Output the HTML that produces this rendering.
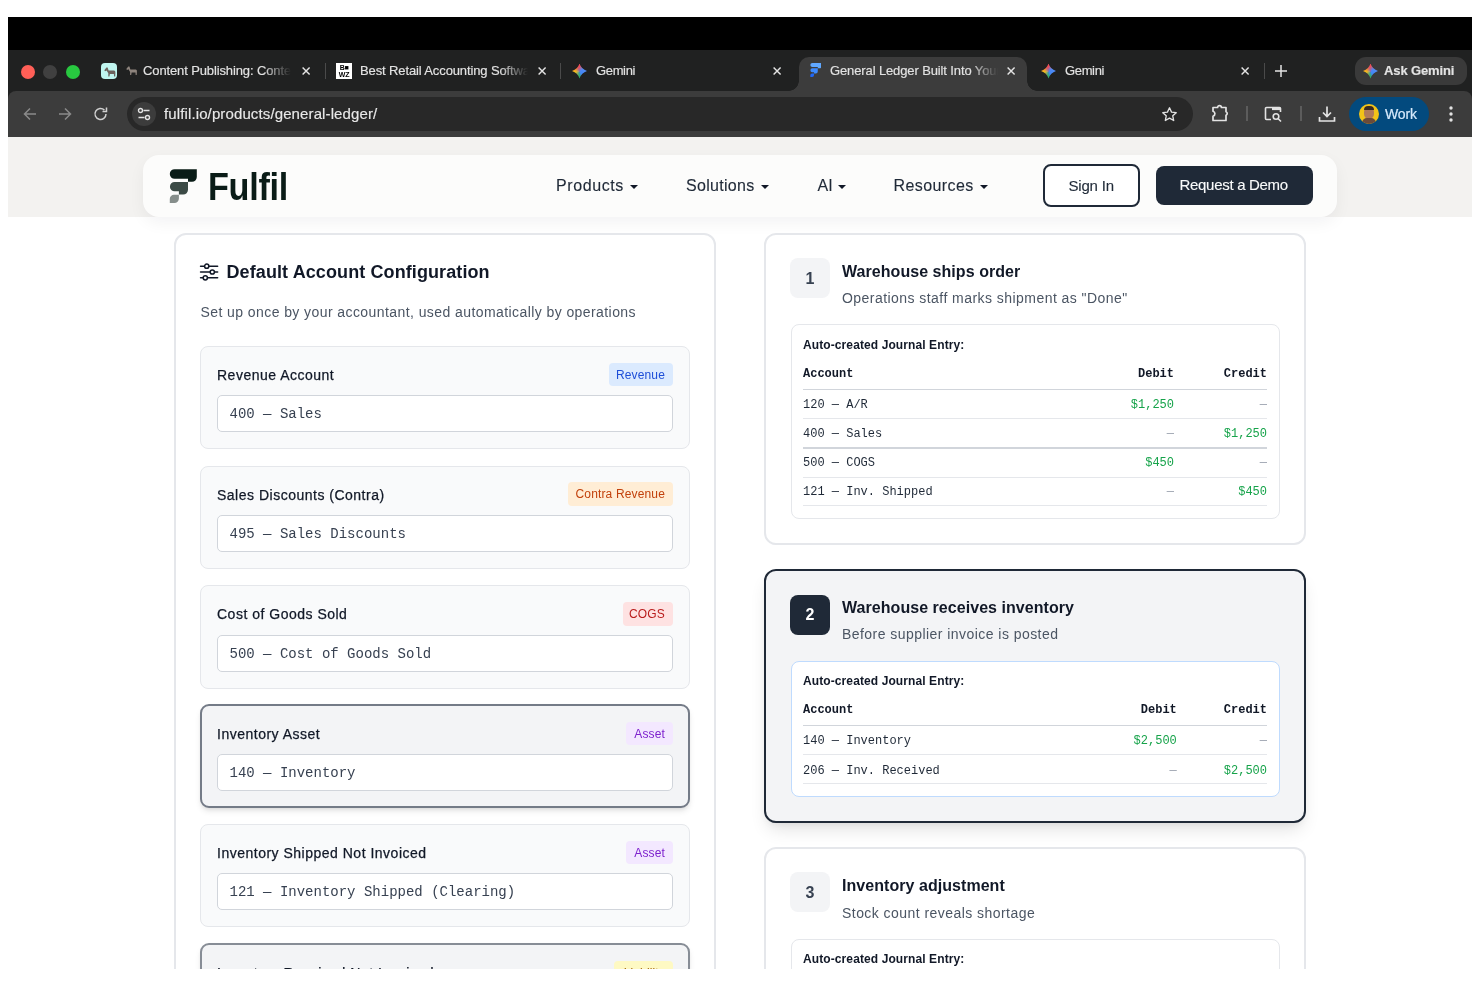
<!DOCTYPE html>
<html><head><meta charset="utf-8">
<style>
*{box-sizing:border-box;margin:0;padding:0}
html,body{width:1480px;height:987px;overflow:hidden;background:#fff;font-family:"Liberation Sans",sans-serif}
.a{position:absolute}
#chrome{will-change:transform;position:absolute;left:0;top:0;width:1480px;height:987px;clip-path:inset(17px 8px 850px 8px)}
#page{will-change:transform;position:absolute;left:0;top:0;width:1480px;height:987px;clip-path:inset(137px 8px 18px 8px);background:#fff}
.tt{position:absolute;color:#e3e3e3;font-size:13px;white-space:nowrap;line-height:16px;letter-spacing:-.12px;-webkit-text-stroke:.15px currentColor}
.nav{position:absolute;font-size:16px;color:#1f2937;line-height:20px;white-space:nowrap;-webkit-text-stroke:.12px currentColor}
.car{position:absolute;width:0;height:0;border-left:4px solid transparent;border-right:4px solid transparent;border-top:4px solid #111827}
</style></head><body>
<div id="chrome">
  <div class="a" style="left:8px;top:17px;width:1464px;height:33px;background:#000"></div>
  <div class="a" style="left:8px;top:50px;width:1464px;height:87px;background:#202121"></div>
  <!-- traffic lights -->
  <div class="a" style="left:20.5px;top:64.5px;width:14px;height:14px;border-radius:50%;background:#ff5f57"></div>
  <div class="a" style="left:43px;top:64.5px;width:14px;height:14px;border-radius:50%;background:#404040"></div>
  <div class="a" style="left:66px;top:64.5px;width:14px;height:14px;border-radius:50%;background:#28c840"></div>
  <!-- tab1 -->
  <div class="a" style="left:101px;top:63px;width:16px;height:16px;border-radius:4px;background:#bff5ef"></div>
  <svg class="a" style="left:104px;top:67px" width="11.5" height="9.6" viewBox="0 0 11.5 9.6"><path d="M0.3 3.2L2.4 0.4L3.6 0.6L4.6 3.6L10.2 3.6Q11.6 3.9 11.4 5.8L11.2 9.6L10.1 9.6L9.9 6.9L5.9 6.9L5.4 9.6L4.3 9.6L4.3 6.2L2.6 3.4L1.1 4.3Z" fill="#6d625d"/></svg>
  <svg class="a" style="left:125.5px;top:66.3px" width="11" height="9.2" viewBox="0 0 11.5 9.6"><path d="M0.3 3.2L2.4 0.4L3.6 0.6L4.6 3.6L10.2 3.6Q11.6 3.9 11.4 5.8L11.2 9.6L10.1 9.6L9.9 6.9L5.9 6.9L5.4 9.6L4.3 9.6L4.3 6.2L2.6 3.4L1.1 4.3Z" fill="#8e847d"/></svg>
  <div class="tt" style="left:143px;top:63px;width:150px;overflow:hidden;-webkit-mask-image:linear-gradient(90deg,#000 120px,transparent 148px)">Content Publishing: Content</div>
  <svg class="a" style="left:301px;top:66px" width="10" height="10" viewBox="0 0 10 10"><path d="M1.6 1.6L8.6 8.6M8.6 1.6L1.6 8.6" stroke="#e3e3e3" stroke-width="1.45"/></svg>
  <div class="a" style="left:325px;top:63px;width:1px;height:16px;background:#4a4a4a"></div>
  <!-- tab2 -->
  <div class="a" style="left:336px;top:63px;width:16px;height:16px;background:#fff"></div>
  <div class="a" style="left:337px;top:64px;width:14px;height:14px;font-size:7px;line-height:7px;font-weight:bold;color:#000;text-align:center;letter-spacing:-.3px">B&#9632;<br>WZ</div>
  <div class="tt" style="left:360px;top:63px;width:170px;overflow:hidden;-webkit-mask-image:linear-gradient(90deg,#000 140px,transparent 168px)">Best Retail Accounting Software</div>
  <svg class="a" style="left:537px;top:66px" width="10" height="10" viewBox="0 0 10 10"><path d="M1.6 1.6L8.6 8.6M8.6 1.6L1.6 8.6" stroke="#e3e3e3" stroke-width="1.45"/></svg>
  <div class="a" style="left:560px;top:63px;width:1px;height:16px;background:#4a4a4a"></div>
  <!-- tab3 -->
  <div class="a" style="left:572.0px;top:63.5px;width:15px;height:15px;clip-path:path('M7.5 15A11.5 11.5 0 0 0 0 7.5A11.5 11.5 0 0 0 7.5 0A11.5 11.5 0 0 0 15 7.5A11.5 11.5 0 0 0 7.5 15Z');background:radial-gradient(circle at 60% 50%,rgba(66,133,244,.85) 0,rgba(66,133,244,.0) 45%),conic-gradient(from 0deg,#ef4d57 0deg,#5b8ef5 60deg,#3f86f4 140deg,#2fae58 185deg,#f7bd1a 265deg,#ef4d57 345deg)"></div>
  <div class="tt" style="left:596px;top:63px;letter-spacing:-.35px">Gemini</div>
  <svg class="a" style="left:772px;top:66px" width="10" height="10" viewBox="0 0 10 10"><path d="M1.6 1.6L8.6 8.6M8.6 1.6L1.6 8.6" stroke="#e3e3e3" stroke-width="1.45"/></svg>
  <!-- active tab -->
  <div class="a" style="left:799px;top:57px;width:228px;height:40px;background:#3c3c3c;border-radius:10px 10px 0 0"></div>
  <div class="a" style="left:789px;top:81px;width:10px;height:10px;background:radial-gradient(circle at 0 0,transparent 9.5px,#3c3c3c 10px)"></div>
  <div class="a" style="left:1027px;top:81px;width:10px;height:10px;background:radial-gradient(circle at 100% 0,transparent 9.5px,#3c3c3c 10px)"></div>
  <svg class="a" style="left:809.5px;top:63px" width="11.9" height="14.4" viewBox="0 0 29 35"><path d="M5.6 0.2H27.8V8A4.8 4.8 0 0 1 23 12.8H19V9.8H5.6A4.8 4.8 0 0 1 5.6 0.2Z" fill="#60a8ff"/><path d="M5.6 13H19V20.8A4.8 4.8 0 0 1 14.2 25.6H9.9V22.3H5.6A4.65 4.65 0 0 1 5.6 13Z" fill="#3d8bff"/><path d="M5 25.8H9.9V29.5A4.5 4.5 0 0 1 5.4 34H0.8V30A4.2 4.2 0 0 1 5 25.8Z" fill="#2168f7"/></svg>
  <div class="tt" style="left:830px;top:63px;width:170px;overflow:hidden;-webkit-mask-image:linear-gradient(90deg,#000 140px,transparent 168px)">General Ledger Built Into Your</div>
  <svg class="a" style="left:1006px;top:66px" width="10" height="10" viewBox="0 0 10 10"><path d="M1.6 1.6L8.6 8.6M8.6 1.6L1.6 8.6" stroke="#e3e3e3" stroke-width="1.45"/></svg>
  <!-- tab5 -->
  <div class="a" style="left:1041.0px;top:63.5px;width:15px;height:15px;clip-path:path('M7.5 15A11.5 11.5 0 0 0 0 7.5A11.5 11.5 0 0 0 7.5 0A11.5 11.5 0 0 0 15 7.5A11.5 11.5 0 0 0 7.5 15Z');background:radial-gradient(circle at 60% 50%,rgba(66,133,244,.85) 0,rgba(66,133,244,.0) 45%),conic-gradient(from 0deg,#ef4d57 0deg,#5b8ef5 60deg,#3f86f4 140deg,#2fae58 185deg,#f7bd1a 265deg,#ef4d57 345deg)"></div>
  <div class="tt" style="left:1065px;top:63px;letter-spacing:-.35px">Gemini</div>
  <svg class="a" style="left:1240px;top:66px" width="10" height="10" viewBox="0 0 10 10"><path d="M1.6 1.6L8.6 8.6M8.6 1.6L1.6 8.6" stroke="#e3e3e3" stroke-width="1.45"/></svg>
  <div class="a" style="left:1264px;top:63px;width:1px;height:16px;background:#4a4a4a"></div>
  <svg class="a" style="left:1275px;top:65px" width="12" height="12" viewBox="0 0 12 12"><path d="M6 0V12M0 6H12" stroke="#e3e3e3" stroke-width="1.5"/></svg>
  <div class="a" style="left:1355px;top:57px;width:112px;height:28px;border-radius:11px;background:#3a3a3a"></div>
  <div class="a" style="left:1363.0px;top:63.5px;width:15px;height:15px;clip-path:path('M7.5 15A11.5 11.5 0 0 0 0 7.5A11.5 11.5 0 0 0 7.5 0A11.5 11.5 0 0 0 15 7.5A11.5 11.5 0 0 0 7.5 15Z');background:radial-gradient(circle at 60% 50%,rgba(66,133,244,.85) 0,rgba(66,133,244,.0) 45%),conic-gradient(from 0deg,#ef4d57 0deg,#5b8ef5 60deg,#3f86f4 140deg,#2fae58 185deg,#f7bd1a 265deg,#ef4d57 345deg)"></div>
  <div class="tt" style="left:1384px;top:63px;font-weight:bold;font-size:13px">Ask Gemini</div>
  <!-- toolbar -->
  <div class="a" style="left:8px;top:91px;width:1464px;height:46.5px;background:#3c3c3c;border-radius:8px 8px 0 0"></div>
  <svg class="a" style="left:22px;top:106px" width="16" height="16" viewBox="0 0 16 16"><path d="M14 8H2.5M8 2.5L2.5 8L8 13.5" stroke="#8a8a8a" stroke-width="1.5" fill="none"/></svg>
  <svg class="a" style="left:57px;top:106px" width="16" height="16" viewBox="0 0 16 16"><path d="M2 8H13.5M8 2.5L13.5 8L8 13.5" stroke="#8a8a8a" stroke-width="1.5" fill="none"/></svg>
  <svg class="a" style="left:93px;top:106px" width="16" height="16" viewBox="0 0 16 16"><path d="M13 8A5.5 5.5 0 1 1 11.4 4.1" stroke="#d0d0d0" stroke-width="1.5" fill="none"/><path d="M13.5 1.5V5.5H9.5" stroke="#d0d0d0" stroke-width="1.5" fill="none"/></svg>
  <div class="a" style="left:127px;top:97px;width:1066px;height:34px;border-radius:17px;background:#282828"></div>
  <div class="a" style="left:132px;top:102px;width:24px;height:24px;border-radius:50%;background:#3c3c3c"></div>
  <svg class="a" style="left:137px;top:107.3px" width="14" height="14" viewBox="0 0 14 14"><circle cx="3.5" cy="3.5" r="2" stroke="#e3e3e3" stroke-width="1.4" fill="none"/><path d="M6.5 3.5H12.5M1.5 10.5H7.5" stroke="#e3e3e3" stroke-width="1.4"/><circle cx="10.5" cy="10.5" r="2" stroke="#e3e3e3" stroke-width="1.4" fill="none"/></svg>
  <div class="tt" style="left:164px;top:105px;font-size:15px;line-height:18px;letter-spacing:.12px;color:#e8e8e8">fulfil.io/products/general-ledger/</div>
  <svg class="a" style="left:1161px;top:106px" width="17" height="17" viewBox="0 0 24 24"><path d="M12 2.5L14.9 8.6L21.5 9.4L16.6 13.9L17.9 20.5L12 17.2L6.1 20.5L7.4 13.9L2.5 9.4L9.1 8.6Z" stroke="#e3e3e3" stroke-width="1.9" fill="none" stroke-linejoin="round"/></svg>
  <svg class="a" style="left:1210px;top:103px" width="20" height="20" viewBox="0 0 20 20"><path d="M3 4.5H7.6A1.9 1.9 0 0 1 11.4 4.5H16V8.8A1.8 1.8 0 0 1 16 12.2V17.5H3V13.2Q5 12.5 4.9 10.5Q4.8 9 3 8.3Z" stroke="#e3e3e3" stroke-width="1.7" fill="none" stroke-linejoin="round"/></svg>
  <div class="a" style="left:1245.5px;top:106.3px;width:2px;height:15.2px;background:#5c5c5c"></div>
  <svg class="a" style="left:1264px;top:105px" width="19" height="18" viewBox="0 0 19 18"><path d="M7 14.5H2.5A1 1 0 0 1 1.5 13.5V3.5A1 1 0 0 1 2.5 2.5H15.5A1 1 0 0 1 16.5 3.5V7" stroke="#e3e3e3" stroke-width="1.6" fill="none"/><rect x="8" y="2.5" width="8.5" height="2.6" fill="#e3e3e3"/><circle cx="12" cy="11.5" r="2.8" stroke="#e3e3e3" stroke-width="1.6" fill="none"/><path d="M14 13.5L17 16.5" stroke="#e3e3e3" stroke-width="1.6"/></svg>
  <div class="a" style="left:1299.5px;top:106.3px;width:2px;height:15.2px;background:#5c5c5c"></div>
  <svg class="a" style="left:1318px;top:105px" width="18" height="18" viewBox="0 0 18 18"><path d="M9 1.5V11.5M5 7.5L9 11.5L13 7.5M1.5 12V16H16.5V12" stroke="#e3e3e3" stroke-width="1.7" fill="none"/></svg>
  <div class="a" style="left:1349px;top:97px;width:80px;height:34px;border-radius:17px;background:#034a7e"></div>
  <div class="a" style="left:1358.5px;top:104px;width:20px;height:20px;border-radius:50%;background:#f2c318;overflow:hidden"><div class="a" style="left:5px;top:3px;width:10px;height:12px;border-radius:5px;background:#b07a5a"></div><div class="a" style="left:3px;top:14px;width:14px;height:8px;border-radius:5px 5px 0 0;background:#6b4a3a"></div><div class="a" style="left:5px;top:2px;width:10px;height:4px;border-radius:4px 4px 0 0;background:#3a2a20"></div></div>
  <div class="tt" style="left:1385px;top:105px;font-size:14px;line-height:18px;color:#d6eafc;-webkit-text-stroke:.2px #d6eafc">Work</div>
  <svg class="a" style="left:1447px;top:104px" width="8" height="20" viewBox="0 0 8 20"><circle cx="4" cy="4" r="1.7" fill="#e3e3e3"/><circle cx="4" cy="10" r="1.7" fill="#e3e3e3"/><circle cx="4" cy="16" r="1.7" fill="#e3e3e3"/></svg>
</div>
<div id="page">
  <div class="a" style="left:8px;top:137px;width:1464px;height:80px;background:#f3f2f0"></div>
  <div class="a" style="left:143px;top:155px;width:1194px;height:62px;background:#fcfcfb;border-radius:16px;box-shadow:0 6px 16px rgba(17,24,39,.05)"></div>
  <!-- logo -->
  <svg class="a" style="left:169px;top:169px" width="29" height="35" viewBox="0 0 29 35"><path d="M5.6 0.2H27.8V8A4.8 4.8 0 0 1 23 12.8H19V9.8H5.6A4.8 4.8 0 0 1 5.6 0.2Z" fill="#0a1c17"/><path d="M5.6 13H19V20.8A4.8 4.8 0 0 1 14.2 25.6H9.9V22.3H5.6A4.65 4.65 0 0 1 5.6 13Z" fill="#3b4a45"/><path d="M5 25.8H9.9V29.5A4.5 4.5 0 0 1 5.4 34H0.8V30A4.2 4.2 0 0 1 5 25.8Z" fill="#868e8b"/></svg>
  <div class="a" style="left:208px;top:164.5px;font-size:38px;line-height:44px;font-weight:bold;color:#0a1c17;transform:scaleX(.9);transform-origin:0 0;letter-spacing:-.3px">Fulfil</div>
  <!-- nav -->
  <div class="nav" style="left:556px;top:176px;letter-spacing:.6px">Products</div><div class="car" style="left:630px;top:185px"></div>
  <div class="nav" style="left:686px;top:176px;letter-spacing:.3px">Solutions</div><div class="car" style="left:761px;top:185px"></div>
  <div class="nav" style="left:817.5px;top:176px">AI</div><div class="car" style="left:838px;top:185px"></div>
  <div class="nav" style="left:893.5px;top:176px;letter-spacing:.4px">Resources</div><div class="car" style="left:979.5px;top:185px"></div>
  <div class="a" style="left:1043px;top:164px;width:97px;height:43px;border:2px solid #1f2937;border-radius:8px;background:#fff"></div>
  <div class="nav" style="left:1068.5px;top:175.5px;font-size:15px;color:#1f2937;letter-spacing:-.2px">Sign In</div>
  <div class="a" style="left:1156px;top:166px;width:157px;height:39px;border-radius:8px;background:#1f2937"></div>
  <div class="nav" style="left:1179.5px;top:175px;font-size:15px;color:#f9fafb;letter-spacing:-.3px">Request a Demo</div>
<div class="a" style="left:174px;top:233px;width:542.00px;height:867.00px;border:2px solid #e5e7eb;border-radius:12px;background:#fff"></div>
<svg class="a" style="left:198px;top:262px" width="22" height="20" viewBox="0 0 22 20"><path d="M2.6 4.2H19.6M2.6 10H19.6M2.6 15.8H19.6" stroke="#111827" stroke-width="1.6" stroke-linecap="round"/><circle cx="8.7" cy="4.2" r="2.1" fill="#fff" stroke="#111827" stroke-width="1.5"/><circle cx="14.3" cy="10" r="2.1" fill="#fff" stroke="#111827" stroke-width="1.5"/><circle cx="7.3" cy="15.8" r="2.1" fill="#fff" stroke="#111827" stroke-width="1.5"/></svg>
<div style="position:absolute;top:263.46px;font-family:'Liberation Sans',sans-serif;font-size:18px;line-height:18px;color:#111827;white-space:nowrap;font-weight:bold;letter-spacing:0.1px;left:226.50px;">Default Account Configuration</div>
<div style="position:absolute;top:305.15px;font-family:'Liberation Sans',sans-serif;font-size:14px;line-height:14px;color:#4b5563;white-space:nowrap;letter-spacing:0.42px;left:200.50px;">Set up once by your accountant, used automatically by operations</div>
<div class="a" style="left:200px;top:345.9px;width:490.00px;height:103.40px;border:1px solid #e5e7eb;border-radius:8px;background:#f9fafb"></div>
<div style="position:absolute;top:367.95px;font-family:'Liberation Sans',sans-serif;font-size:14px;line-height:14px;color:#111827;white-space:nowrap;letter-spacing:0.5px;left:217.00px;-webkit-text-stroke:.25px #111827;">Revenue Account</div>
<div class="a" style="left:608.5px;top:362.59999999999997px;width:64.50px;height:23.60px;background:#dbeafe;border-radius:4px"></div>
<div style="position:absolute;top:368.74px;font-family:'Liberation Sans',sans-serif;font-size:12px;line-height:12px;color:#1d4ed8;white-space:nowrap;letter-spacing:0.15px;right:815.00px;text-align:right;">Revenue</div>
<div class="a" style="left:217px;top:395.09999999999997px;width:456.00px;height:37.20px;border:1px solid #d1d5db;border-radius:5px;background:#fff"></div>
<div style="position:absolute;top:407.17px;font-family:'Liberation Mono',monospace;font-size:14px;line-height:14px;color:#374151;white-space:nowrap;left:229.50px;">400 — Sales</div>
<div class="a" style="left:200px;top:465.6px;width:490.00px;height:103.40px;border:1px solid #e5e7eb;border-radius:8px;background:#f9fafb"></div>
<div style="position:absolute;top:487.65px;font-family:'Liberation Sans',sans-serif;font-size:14px;line-height:14px;color:#111827;white-space:nowrap;letter-spacing:0.5px;left:217.00px;-webkit-text-stroke:.25px #111827;">Sales Discounts (Contra)</div>
<div class="a" style="left:567.5px;top:482.3px;width:105.50px;height:23.60px;background:#ffedd5;border-radius:4px"></div>
<div style="position:absolute;top:488.44px;font-family:'Liberation Sans',sans-serif;font-size:12px;line-height:12px;color:#c2410c;white-space:nowrap;letter-spacing:0.15px;right:815.00px;text-align:right;">Contra Revenue</div>
<div class="a" style="left:217px;top:514.8000000000001px;width:456.00px;height:37.20px;border:1px solid #d1d5db;border-radius:5px;background:#fff"></div>
<div style="position:absolute;top:526.87px;font-family:'Liberation Mono',monospace;font-size:14px;line-height:14px;color:#374151;white-space:nowrap;left:229.50px;">495 — Sales Discounts</div>
<div class="a" style="left:200px;top:585.4px;width:490.00px;height:103.40px;border:1px solid #e5e7eb;border-radius:8px;background:#f9fafb"></div>
<div style="position:absolute;top:607.45px;font-family:'Liberation Sans',sans-serif;font-size:14px;line-height:14px;color:#111827;white-space:nowrap;letter-spacing:0.5px;left:217.00px;-webkit-text-stroke:.25px #111827;">Cost of Goods Sold</div>
<div class="a" style="left:623.4px;top:602.1px;width:49.60px;height:23.60px;background:#fee2e2;border-radius:4px"></div>
<div style="position:absolute;top:608.24px;font-family:'Liberation Sans',sans-serif;font-size:12px;line-height:12px;color:#b91c1c;white-space:nowrap;letter-spacing:0.15px;right:815.00px;text-align:right;">COGS</div>
<div class="a" style="left:217px;top:634.6px;width:456.00px;height:37.20px;border:1px solid #d1d5db;border-radius:5px;background:#fff"></div>
<div style="position:absolute;top:646.67px;font-family:'Liberation Mono',monospace;font-size:14px;line-height:14px;color:#374151;white-space:nowrap;left:229.50px;">500 — Cost of Goods Sold</div>
<div class="a" style="left:199.6px;top:704.1999999999999px;width:490.70px;height:104.20px;border:2px solid #747b87;border-radius:9px;background:#f3f4f6;box-shadow:0 4px 6px -1px rgba(0,0,0,.1),0 2px 4px -2px rgba(0,0,0,.1)"></div>
<div style="position:absolute;top:726.85px;font-family:'Liberation Sans',sans-serif;font-size:14px;line-height:14px;color:#111827;white-space:nowrap;letter-spacing:0.5px;left:217.00px;-webkit-text-stroke:.25px #111827;">Inventory Asset</div>
<div class="a" style="left:626px;top:721.5px;width:47.00px;height:23.60px;background:#f3e8ff;border-radius:4px"></div>
<div style="position:absolute;top:727.64px;font-family:'Liberation Sans',sans-serif;font-size:12px;line-height:12px;color:#7e22ce;white-space:nowrap;letter-spacing:0.15px;right:815.00px;text-align:right;">Asset</div>
<div class="a" style="left:217px;top:754.0px;width:456.00px;height:37.20px;border:1px solid #d1d5db;border-radius:5px;background:#fff"></div>
<div style="position:absolute;top:766.07px;font-family:'Liberation Mono',monospace;font-size:14px;line-height:14px;color:#374151;white-space:nowrap;left:229.50px;">140 — Inventory</div>
<div class="a" style="left:200px;top:824.1px;width:490.00px;height:103.40px;border:1px solid #e5e7eb;border-radius:8px;background:#f9fafb"></div>
<div style="position:absolute;top:846.15px;font-family:'Liberation Sans',sans-serif;font-size:14px;line-height:14px;color:#111827;white-space:nowrap;letter-spacing:0.5px;left:217.00px;-webkit-text-stroke:.25px #111827;">Inventory Shipped Not Invoiced</div>
<div class="a" style="left:626px;top:840.8000000000001px;width:47.00px;height:23.60px;background:#f3e8ff;border-radius:4px"></div>
<div style="position:absolute;top:846.94px;font-family:'Liberation Sans',sans-serif;font-size:12px;line-height:12px;color:#7e22ce;white-space:nowrap;letter-spacing:0.15px;right:815.00px;text-align:right;">Asset</div>
<div class="a" style="left:217px;top:873.3000000000001px;width:456.00px;height:37.20px;border:1px solid #d1d5db;border-radius:5px;background:#fff"></div>
<div style="position:absolute;top:885.37px;font-family:'Liberation Mono',monospace;font-size:14px;line-height:14px;color:#374151;white-space:nowrap;left:229.50px;">121 — Inventory Shipped (Clearing)</div>
<div class="a" style="left:199.6px;top:943.1999999999999px;width:490.70px;height:104.20px;border:2px solid #878d96;border-radius:9px;background:#f3f4f6;box-shadow:0 4px 6px -1px rgba(0,0,0,.1),0 2px 4px -2px rgba(0,0,0,.1)"></div>
<div style="position:absolute;top:965.85px;font-family:'Liberation Sans',sans-serif;font-size:14px;line-height:14px;color:#111827;white-space:nowrap;letter-spacing:0.5px;left:217.00px;-webkit-text-stroke:.25px #111827;">Inventory Received Not Invoiced</div>
<div class="a" style="left:614.2px;top:960.5px;width:58.80px;height:23.60px;background:#fef9c3;border-radius:4px"></div>
<div style="position:absolute;top:966.64px;font-family:'Liberation Sans',sans-serif;font-size:12px;line-height:12px;color:#a16207;white-space:nowrap;letter-spacing:0.15px;right:815.00px;text-align:right;">Liability</div>
<div class="a" style="left:217px;top:993.0px;width:456.00px;height:37.20px;border:1px solid #d1d5db;border-radius:5px;background:#fff"></div>
<div style="position:absolute;top:1005.07px;font-family:'Liberation Mono',monospace;font-size:14px;line-height:14px;color:#374151;white-space:nowrap;left:229.50px;">206 — Inventory Received (Clearing)</div>
<div class="a" style="left:764px;top:233px;width:542.00px;height:312.00px;border:2px solid #e5e7eb;border-radius:12px;background:#fff"></div>
<div class="a" style="left:790px;top:258px;width:40.00px;height:40.00px;background:#f3f4f6;border-radius:8px"></div>
<div style="position:absolute;top:270.66px;font-family:'Liberation Sans',sans-serif;font-size:16px;line-height:16px;color:#374151;white-space:nowrap;font-weight:bold;left:810.00px;width:0;text-align:center;display:flex;justify-content:center;">1</div>
<div style="position:absolute;top:264.06px;font-family:'Liberation Sans',sans-serif;font-size:16px;line-height:16px;color:#111827;white-space:nowrap;font-weight:bold;letter-spacing:0.05px;left:842.00px;">Warehouse ships order</div>
<div style="position:absolute;top:291.25px;font-family:'Liberation Sans',sans-serif;font-size:14px;line-height:14px;color:#4b5563;white-space:nowrap;letter-spacing:0.45px;left:842.00px;">Operations staff marks shipment as "Done"</div>
<div class="a" style="left:790.5px;top:324.3px;width:489.50px;height:194.70px;border:1px solid #e5e7eb;border-radius:8px;background:#fff"></div>
<div style="position:absolute;top:338.84px;font-family:'Liberation Sans',sans-serif;font-size:12px;line-height:12px;color:#111827;white-space:nowrap;font-weight:bold;letter-spacing:0.1px;left:803.00px;">Auto-created Journal Entry:</div>
<div style="position:absolute;top:367.91px;font-family:'Liberation Mono',monospace;font-size:12px;line-height:12px;color:#111827;white-space:nowrap;font-weight:bold;left:803.00px;">Account</div>
<div style="position:absolute;top:367.91px;font-family:'Liberation Mono',monospace;font-size:12px;line-height:12px;color:#111827;white-space:nowrap;font-weight:bold;right:306.00px;text-align:right;">Debit</div>
<div style="position:absolute;top:367.91px;font-family:'Liberation Mono',monospace;font-size:12px;line-height:12px;color:#111827;white-space:nowrap;font-weight:bold;right:213.00px;text-align:right;">Credit</div>
<div class="a" style="left:803px;top:389.0px;width:464.00px;height:1.00px;background:#d1d5db"></div>
<div style="position:absolute;top:398.81px;font-family:'Liberation Mono',monospace;font-size:12px;line-height:12px;color:#1f2937;white-space:nowrap;left:803.00px;">120 — A/R</div>
<div style="position:absolute;top:398.81px;font-family:'Liberation Mono',monospace;font-size:12px;line-height:12px;color:#16a34a;white-space:nowrap;right:306.00px;text-align:right;">$1,250</div>
<div style="position:absolute;top:398.81px;font-family:'Liberation Mono',monospace;font-size:12px;line-height:12px;color:#9ca3af;white-space:nowrap;right:213.00px;text-align:right;">—</div>
<div class="a" style="left:803px;top:418.1px;width:464.00px;height:1.00px;background:#e5e7eb"></div>
<div style="position:absolute;top:427.71px;font-family:'Liberation Mono',monospace;font-size:12px;line-height:12px;color:#1f2937;white-space:nowrap;left:803.00px;">400 — Sales</div>
<div style="position:absolute;top:427.71px;font-family:'Liberation Mono',monospace;font-size:12px;line-height:12px;color:#9ca3af;white-space:nowrap;right:306.00px;text-align:right;">—</div>
<div style="position:absolute;top:427.71px;font-family:'Liberation Mono',monospace;font-size:12px;line-height:12px;color:#16a34a;white-space:nowrap;right:213.00px;text-align:right;">$1,250</div>
<div class="a" style="left:803px;top:446.5px;width:464.00px;height:2.00px;background:#d1d5db"></div>
<div style="position:absolute;top:457.01px;font-family:'Liberation Mono',monospace;font-size:12px;line-height:12px;color:#1f2937;white-space:nowrap;left:803.00px;">500 — COGS</div>
<div style="position:absolute;top:457.01px;font-family:'Liberation Mono',monospace;font-size:12px;line-height:12px;color:#16a34a;white-space:nowrap;right:306.00px;text-align:right;">$450</div>
<div style="position:absolute;top:457.01px;font-family:'Liberation Mono',monospace;font-size:12px;line-height:12px;color:#9ca3af;white-space:nowrap;right:213.00px;text-align:right;">—</div>
<div class="a" style="left:803px;top:476.7px;width:464.00px;height:1.00px;background:#e5e7eb"></div>
<div style="position:absolute;top:486.01px;font-family:'Liberation Mono',monospace;font-size:12px;line-height:12px;color:#1f2937;white-space:nowrap;left:803.00px;">121 — Inv. Shipped</div>
<div style="position:absolute;top:486.01px;font-family:'Liberation Mono',monospace;font-size:12px;line-height:12px;color:#9ca3af;white-space:nowrap;right:306.00px;text-align:right;">—</div>
<div style="position:absolute;top:486.01px;font-family:'Liberation Mono',monospace;font-size:12px;line-height:12px;color:#16a34a;white-space:nowrap;right:213.00px;text-align:right;">$450</div>
<div class="a" style="left:803px;top:505.3px;width:464.00px;height:1.00px;background:#e5e7eb"></div>
<div class="a" style="left:764px;top:569px;width:542.00px;height:254.00px;border:2px solid #1f2937;border-radius:12px;background:#f3f4f6;box-shadow:0 10px 18px -4px rgba(0,0,0,.12),0 4px 8px -4px rgba(0,0,0,.08)"></div>
<div class="a" style="left:790px;top:595px;width:40.00px;height:40.00px;background:#1f2937;border-radius:8px"></div>
<div style="position:absolute;top:606.66px;font-family:'Liberation Sans',sans-serif;font-size:16px;line-height:16px;color:#fff;white-space:nowrap;font-weight:bold;left:810.00px;width:0;text-align:center;display:flex;justify-content:center;">2</div>
<div style="position:absolute;top:600.06px;font-family:'Liberation Sans',sans-serif;font-size:16px;line-height:16px;color:#111827;white-space:nowrap;font-weight:bold;letter-spacing:0.05px;left:842.00px;">Warehouse receives inventory</div>
<div style="position:absolute;top:627.25px;font-family:'Liberation Sans',sans-serif;font-size:14px;line-height:14px;color:#4b5563;white-space:nowrap;letter-spacing:0.45px;left:842.00px;">Before supplier invoice is posted</div>
<div class="a" style="left:790.5px;top:661.3px;width:489.50px;height:135.70px;border:1px solid #bfdbfe;border-radius:8px;background:#fff"></div>
<div style="position:absolute;top:675.34px;font-family:'Liberation Sans',sans-serif;font-size:12px;line-height:12px;color:#111827;white-space:nowrap;font-weight:bold;letter-spacing:0.1px;left:803.00px;">Auto-created Journal Entry:</div>
<div style="position:absolute;top:704.21px;font-family:'Liberation Mono',monospace;font-size:12px;line-height:12px;color:#111827;white-space:nowrap;font-weight:bold;left:803.00px;">Account</div>
<div style="position:absolute;top:704.21px;font-family:'Liberation Mono',monospace;font-size:12px;line-height:12px;color:#111827;white-space:nowrap;font-weight:bold;right:303.20px;text-align:right;">Debit</div>
<div style="position:absolute;top:704.21px;font-family:'Liberation Mono',monospace;font-size:12px;line-height:12px;color:#111827;white-space:nowrap;font-weight:bold;right:213.00px;text-align:right;">Credit</div>
<div class="a" style="left:803px;top:725.0px;width:464.00px;height:1.00px;background:#d1d5db"></div>
<div style="position:absolute;top:735.11px;font-family:'Liberation Mono',monospace;font-size:12px;line-height:12px;color:#1f2937;white-space:nowrap;left:803.00px;">140 — Inventory</div>
<div style="position:absolute;top:735.11px;font-family:'Liberation Mono',monospace;font-size:12px;line-height:12px;color:#16a34a;white-space:nowrap;right:303.20px;text-align:right;">$2,500</div>
<div style="position:absolute;top:735.11px;font-family:'Liberation Mono',monospace;font-size:12px;line-height:12px;color:#9ca3af;white-space:nowrap;right:213.00px;text-align:right;">—</div>
<div class="a" style="left:803px;top:753.9px;width:464.00px;height:1.00px;background:#e5e7eb"></div>
<div style="position:absolute;top:764.51px;font-family:'Liberation Mono',monospace;font-size:12px;line-height:12px;color:#1f2937;white-space:nowrap;left:803.00px;">206 — Inv. Received</div>
<div style="position:absolute;top:764.51px;font-family:'Liberation Mono',monospace;font-size:12px;line-height:12px;color:#9ca3af;white-space:nowrap;right:303.20px;text-align:right;">—</div>
<div style="position:absolute;top:764.51px;font-family:'Liberation Mono',monospace;font-size:12px;line-height:12px;color:#16a34a;white-space:nowrap;right:213.00px;text-align:right;">$2,500</div>
<div class="a" style="left:803px;top:783.1px;width:464.00px;height:1.00px;background:#e5e7eb"></div>
<div class="a" style="left:764px;top:847.3px;width:542.00px;height:252.70px;border:2px solid #e5e7eb;border-radius:12px;background:#fff"></div>
<div class="a" style="left:790px;top:872.3px;width:40.00px;height:40.00px;background:#f3f4f6;border-radius:8px"></div>
<div style="position:absolute;top:884.96px;font-family:'Liberation Sans',sans-serif;font-size:16px;line-height:16px;color:#374151;white-space:nowrap;font-weight:bold;left:810.00px;width:0;text-align:center;display:flex;justify-content:center;">3</div>
<div style="position:absolute;top:878.36px;font-family:'Liberation Sans',sans-serif;font-size:16px;line-height:16px;color:#111827;white-space:nowrap;font-weight:bold;letter-spacing:0.05px;left:842.00px;">Inventory adjustment</div>
<div style="position:absolute;top:905.55px;font-family:'Liberation Sans',sans-serif;font-size:14px;line-height:14px;color:#4b5563;white-space:nowrap;letter-spacing:0.45px;left:842.00px;">Stock count reveals shortage</div>
<div class="a" style="left:790.5px;top:938.5px;width:489.50px;height:400.00px;border:1px solid #e5e7eb;border-radius:8px;background:#fff"></div>
<div style="position:absolute;top:953.04px;font-family:'Liberation Sans',sans-serif;font-size:12px;line-height:12px;color:#111827;white-space:nowrap;font-weight:bold;letter-spacing:0.1px;left:803.00px;">Auto-created Journal Entry:</div></div>
</body></html>
